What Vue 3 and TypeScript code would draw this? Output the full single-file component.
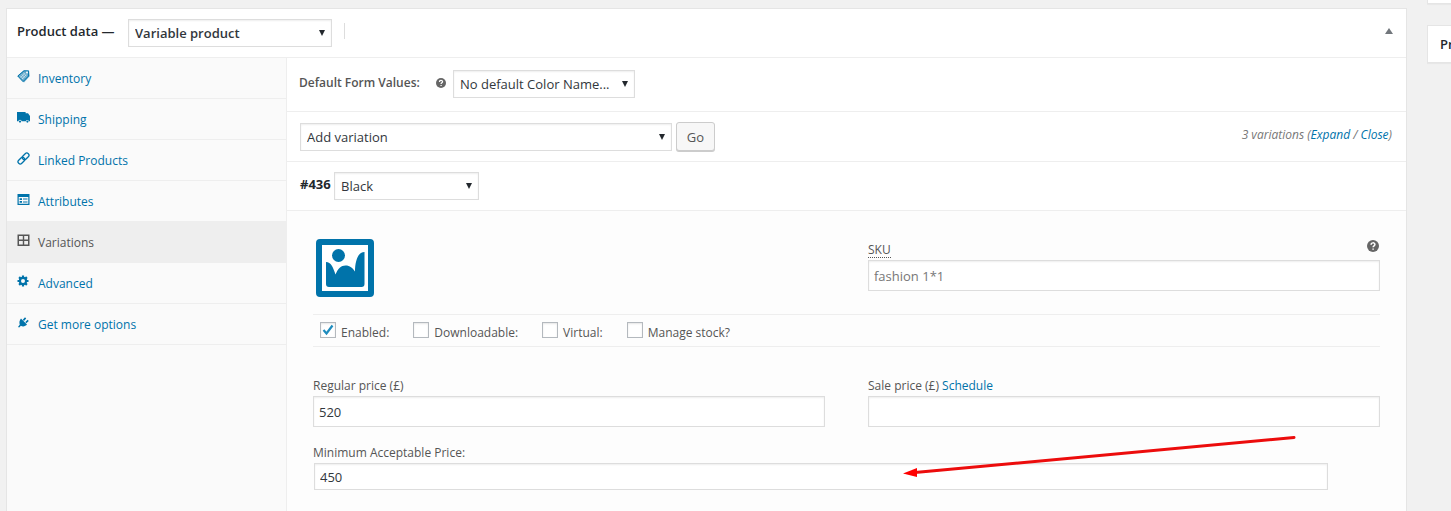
<script setup lang="ts">
import { ref } from 'vue'

interface Tab {
  id: string
  label: string
}

const tabs: Tab[] = [
  { id: 'inventory', label: 'Inventory' },
  { id: 'shipping', label: 'Shipping' },
  { id: 'linked', label: 'Linked Products' },
  { id: 'attributes', label: 'Attributes' },
  { id: 'variations', label: 'Variations' },
  { id: 'advanced', label: 'Advanced' },
  { id: 'more', label: 'Get more options' },
]
const active = ref('variations')

const flags = ref([
  { id: 'enabled', label: 'Enabled:', on: true },
  { id: 'downloadable', label: 'Downloadable:', on: false },
  { id: 'virtual', label: 'Virtual:', on: false },
  { id: 'stock', label: 'Manage stock?', on: false },
])

const regular = ref('520')
const sale = ref('')
const minimum = ref('450')
const sku = ref('')
</script>

<template>
  <div class="page">
    <main class="panel">
      <header class="panel-head">
        <label class="title" for="ptype">Product data —</label>
        <span class="select type">
          <select id="ptype"><option>Variable product</option></select>
          <svg viewBox="0 0 6 6"><path d="M0 0H6L3 6Z" /></svg>
        </span>
        <span class="divider"></span>
        <button class="toggle" type="button" aria-label="Toggle panel">
          <svg viewBox="0 0 8 6" width="8" height="6"><path d="M0 6H8L4 0Z" /></svg>
        </button>
      </header>

      <div class="panel-body">
        <nav class="tabs">
          <a v-for="t in tabs" :key="t.id" href="#" class="tab" :class="{ active: t.id === active }" @click.prevent="active = t.id">
            <svg v-if="t.id === 'inventory'" class="ico" viewBox="0 0 13 13">
              <path d="M0.5 6 6.5 0.6 12 1.2 12.6 6.2 7 12.4Z" opacity=".6" />
              <path class="line" d="M0.8 6 7 0.8H11.600V6L6 11.600Z" />
              <circle class="hole" cx="10" cy="2.6" r="1" />
              <path class="cut" d="M3 5.6 6.8 9.4M4.600 4.200 8.200 7.800M6.200 2.800 9.600 6.200M3.600 7.600 8 3.200M5 9 9.400 4.600" />
            </svg>
            <svg v-else-if="t.id === 'shipping'" class="ico" viewBox="0 0 13 13">
              <path d="M0 1H8.6V2.200H11L13 5V10.3H11.9A1.6 1.6 0 0 0 8.8 10.3H4.6A1.6 1.6 0 0 0 1.4 10.3H0Z" />
              <circle cx="3" cy="10.6" r="1.1" /><circle cx="10.4" cy="10.6" r="1.1" />
            </svg>
            <svg v-else-if="t.id === 'linked'" class="ico" viewBox="0 0 13 13">
              <g transform="rotate(-45 6.5 6.5)">
                <rect class="link" x="-0.3" y="4.3" width="7.6" height="4.4" rx="2.2" />
                <rect class="link" x="5.7" y="4.3" width="7.6" height="4.4" rx="2.2" />
              </g>
            </svg>
            <svg v-else-if="t.id === 'attributes'" class="ico" viewBox="0 0 13 13">
              <path fill-rule="evenodd" d="M0.5 1H12.5V12H0.5ZM1.7 4V10.8H11.3V4Z" />
              <path d="M2.6 5.2H5V7H2.6ZM2.6 8H5V9.8H2.6ZM6 5.5H10.5V6.6H6ZM6 8.4H10.5V9.5H6Z" />
            </svg>
            <svg v-else-if="t.id === 'variations'" class="ico" viewBox="0 0 13 13">
              <path fill-rule="evenodd" d="M0.5 0.5H12.5V12H0.5ZM2 2V5.6H5.8V2ZM7.2 2V5.6H11V2ZM2 7V10.6H5.8V7ZM7.2 7V10.6H11V7Z" />
            </svg>
            <svg v-else-if="t.id === 'advanced'" class="ico" viewBox="0 0 13 13">
              <circle class="ring" cx="6" cy="6" r="3.1" />
              <path class="teeth" d="M6 .5V2.6M6 9.4V11.5M.5 6H2.6M9.4 6H11.5M2.1 2.1 3.6 3.6M8.4 8.4 9.9 9.9M9.9 2.1 8.4 3.6M3.6 8.4 2.1 9.9" />
            </svg>
            <svg v-else class="ico" viewBox="0 0 13 13">
              <path d="M4 2.4 10 8.6C8.6 10.4 5.6 11 3.9 9.7L2.2 11.6 1 11 2.8 8.6C2 6.8 2.4 4 4 2.4Z" />
              <path class="pin" d="M6.4 4.4 8.6 1.9M8.8 6.6 11.2 4.3" />
            </svg>
            <span>{{ t.label }}</span>
          </a>
        </nav>

        <section class="content">
          <div class="bar defaults">
            <label class="strong" for="dform">Default Form Values:</label>
            <svg class="help small" viewBox="0 0 12 12">
              <circle cx="6" cy="6" r="6" />
              <path d="M4.1 4.7C4.1 2.3 7.9 2.3 7.9 4.5 7.9 5.9 6.1 5.8 6.1 7.3" /><path d="M6.1 8.4V9.7" />
            </svg>
            <span class="select color">
              <select id="dform"><option>No default Color Name...</option></select>
              <svg viewBox="0 0 6 6"><path d="M0 0H6L3 6Z" /></svg>
            </span>
          </div>

          <div class="bar add">
            <span class="select action">
              <select aria-label="Variation action"><option>Add variation</option></select>
              <svg viewBox="0 0 6 6"><path d="M0 0H6L3 6Z" /></svg>
            </span>
            <button class="go" type="button">Go</button>
            <p class="count">3 variations (<a href="#">Expand</a> / <a href="#">Close</a>)</p>
          </div>

          <div class="bar item">
            <label class="number" for="vcolor">#436</label>
            <span class="select black">
              <select id="vcolor"><option>Black</option></select>
              <svg viewBox="0 0 6 6"><path d="M0 0H6L3 6Z" /></svg>
            </span>
          </div>

          <div class="variation">
            <div class="row top">
              <a href="#" class="image" aria-label="Upload an image">
                <svg viewBox="0 0 58 58">
                  <path fill-rule="evenodd" d="M4 0H54A4 4 0 0 1 58 4V54A4 4 0 0 1 54 58H4A4 4 0 0 1 0 54V4A4 4 0 0 1 4 0ZM6 6V52H52V6Z" />
                  <path class="paper" d="M6 6H52V52H6Z" />
                  <circle cx="22.5" cy="16.5" r="6.5" />
                  <path d="M10 23C15 23 17 28 19.500 35.500C22 29.500 25 26.500 29.500 26.500C34 26.500 36.500 29 39 32.500C39 22 42 13 48.500 13V45A3 3 0 0 1 45.500 48H13A3 3 0 0 1 10 45Z" />
                </svg>
              </a>
              <div class="field">
                <div class="sku-head">
                  <label for="sku"><abbr title="Stock Keeping Unit">SKU</abbr></label>
                  <svg class="help" viewBox="0 0 12 12">
                    <circle cx="6" cy="6" r="6" />
                    <path d="M4.1 4.7C4.1 2.3 7.9 2.3 7.9 4.5 7.9 5.9 6.1 5.8 6.1 7.3" /><path d="M6.1 8.4V9.7" />
                  </svg>
                </div>
                <input id="sku" v-model="sku" type="text" placeholder="fashion 1*1" />
              </div>
            </div>

            <div class="flags">
              <label v-for="f in flags" :key="f.id">
                <span class="box">
                  <input v-model="f.on" type="checkbox" />
                  <svg v-if="f.on" viewBox="0 0 16 16"><path d="M3.500 8 6.500 11.500 12.500 3.500" /></svg>
                </span>
                <span>{{ f.label }}</span>
              </label>
            </div>

            <div class="row prices">
              <div class="field">
                <label for="regular">Regular price (£)</label>
                <input id="regular" v-model="regular" type="text" />
              </div>
              <div class="field">
                <div><label for="sale">Sale price (£)</label> <a href="#">Schedule</a></div>
                <input id="sale" v-model="sale" type="text" />
              </div>
            </div>

            <div class="field minimum">
              <label for="minimum">Minimum Acceptable Price:</label>
              <input id="minimum" v-model="minimum" type="text" />
            </div>
          </div>
        </section>
      </div>
    </main>

    <aside class="side">
      <div class="card stub"></div>
      <div class="card">Product gallery</div>
    </aside>

    <svg class="pointer" viewBox="0 0 400 50" width="400" height="50">
      <path class="shaft" d="M393 7.500 14 42.500" />
      <path class="head" d="M2 43.500 16 38V47Z" />
    </svg>
  </div>
</template>

<style>
body {
  background: #f1f1f1;
}
</style>

<style scoped>
.page,
.page * {
  box-sizing: border-box;
}
.page {
  position: relative;
  display: flex;
  gap: 20px;
  min-height: 100vh;
  padding-left: 6px;
  overflow: hidden;
  background: #f1f1f1;
  color: #555;
  font: 13px/20px "Segoe UI", "Open Sans", "Noto Sans", sans-serif;
}
a {
  color: #0073aa;
  text-decoration: none;
}
.panel {
  display: flex;
  flex: 1;
  flex-direction: column;
  min-width: 0;
  margin-top: 8px;
  border: 1px solid #e5e5e5;
  border-bottom: 0;
  background: #fff;
}
.panel-head {
  display: flex;
  align-items: center;
  height: 49px;
  padding: 0 13px 0 10px;
  border-bottom: 1px solid #eee;
}
.title {
  width: 111px;
  padding-bottom: 4px;
  color: #23282d;
  font-weight: 600;
  white-space: nowrap;
}
.divider {
  width: 1px;
  height: 16px;
  margin: 0 0 4px 12px;
  background: #ddd;
}
.toggle {
  display: flex;
  margin-left: auto;
  padding: 0 0 4px;
  border: 0;
  background: none;
}
.toggle svg {
  fill: #72777c;
}
.select {
  display: grid;
  align-items: center;
}
.select > * {
  grid-area: 1 / 1;
}
.select svg {
  justify-self: end;
  width: 6px;
  height: 6px;
  margin-right: 7px;
  pointer-events: none;
  fill: #23282d;
}
select {
  width: 100%;
  height: 28px;
  padding: 0 18px 0 6px;
  appearance: none;
  border: 1px solid #ddd;
  border-radius: 0;
  background: #fff;
  box-shadow: inset 0 1px 2px rgba(0, 0, 0, 0.07);
  color: #32373c;
  font: inherit;
}
.type {
  width: 204px;
}
.type select {
  font-weight: 600;
}
.color {
  width: 182px;
  margin-bottom: 2px;
}
.color select {
  padding-right: 8px;
}
.action {
  width: 372px;
}
.black {
  width: 145px;
}
.panel-body {
  display: flex;
  flex: 1;
}
.tabs {
  width: 280px;
  border-right: 1px solid #eee;
  background: #fafafa;
}
.tab {
  display: flex;
  align-items: center;
  gap: 8px;
  height: 41px;
  padding-left: 10px;
  border-bottom: 1px solid #eee;
  font-size: 12px;
}
.tab.active {
  background: #eee;
  color: #555;
}
.ico {
  width: 13px;
  height: 13px;
  margin-bottom: 3px;
  fill: currentColor;
}
.tab span {
  padding-top: 1px;
}
.ico .line,
.ico .link,
.ico .ring,
.ico .teeth,
.ico .pin {
  fill: none;
  stroke: currentColor;
  stroke-width: 1.3;
}
.ico .line {
  stroke-width: 1;
}
.ico .ring,
.ico .teeth {
  stroke-width: 2.2;
}
.ico .pin {
  stroke-width: 1.6;
}
.ico .cut {
  fill: none;
  stroke: #fafafa;
  stroke-width: 0.5;
}
.ico .hole {
  fill: #fafafa;
}
.content {
  display: flex;
  flex: 1;
  flex-direction: column;
  min-width: 0;
}
.bar {
  display: flex;
  align-items: center;
  height: 50px;
  padding: 0 14px 0 13px;
  border-bottom: 1px solid #eee;
}
.defaults {
  height: 54px;
  padding-left: 12px;
}
.strong {
  width: 137px;
  padding-bottom: 3px;
  font-size: 12px;
  font-weight: 600;
}
.help {
  width: 12px;
  height: 12px;
  margin: 1px 1px 0 0;
  fill: #666;
}
.help path {
  fill: none;
  stroke: #fff;
  stroke-width: 1.5;
}
.help.small {
  width: 10px;
  height: 10px;
  margin: 0 7px 3px 0;
}
.go {
  width: 39px;
  height: 29px;
  margin-left: 4px;
  padding: 0;
  border: 1px solid #ccc;
  border-radius: 3px;
  background: #f7f7f7;
  box-shadow: 0 1px 0 #ccc;
  color: #555;
  font: inherit;
}
.count {
  margin: 0 0 4px auto;
  color: #777;
  font-size: 12px;
  font-style: italic;
}
.item {
  height: 49px;
}
.number {
  width: 34px;
  padding-bottom: 4px;
  color: #23282d;
  font-weight: 700;
}
.variation {
  flex: 1;
  padding: 28px 26px 21px;
  background: #fdfdfd;
}
.row {
  display: grid;
  grid-template-columns: 1fr 1fr;
  gap: 43px;
}
.image {
  width: 58px;
  height: 58px;
  margin-left: 3px;
}
.image svg {
  display: block;
  fill: #0073aa;
}
.image .paper {
  fill: #fff;
}
.top {
  height: 75px;
}
.field {
  display: flex;
  flex-direction: column;
  font-size: 12px;
  line-height: 21px;
}
.sku-head {
  display: flex;
  justify-content: space-between;
}
abbr {
  display: inline-block;
  border-bottom: 1px dotted #555;
  text-decoration: none;
  line-height: 14px;
}
.field input {
  width: 100%;
  height: 31px;
  padding: 0 5px;
  border: 1px solid #ddd;
  background: #fff;
  box-shadow: inset 0 1px 2px rgba(0, 0, 0, 0.07);
  color: #32373c;
  font: inherit;
  font-size: 13px;
}
.field input::placeholder {
  color: #777;
  opacity: 1;
}
.flags {
  display: flex;
  gap: 24px;
  height: 33px;
  padding-left: 7px;
  border: solid #eee;
  border-width: 1px 0;
}
.flags label {
  display: flex;
  align-items: center;
  gap: 5px;
  font-size: 12px;
}
.flags label > span:last-child {
  padding-top: 4px;
}
.box {
  display: grid;
  margin-bottom: 1px;
}
.box > * {
  grid-area: 1 / 1;
  width: 16px;
  height: 16px;
  margin: 0;
}
.box input {
  appearance: none;
  border: 1px solid #b4b9be;
  background: #fff;
  box-shadow: inset 0 1px 2px rgba(0, 0, 0, 0.1);
}
.box svg {
  fill: none;
  stroke: #1e8cbe;
  stroke-width: 2.2;
  pointer-events: none;
}
.prices {
  margin: 28px 0 15px;
}
.field.minimum input {
  width: 95%;
  height: 27px;
  margin-left: 1px;
}
.side {
  width: 24px;
  overflow: hidden;
}
.card {
  width: 280px;
  height: 38px;
  padding: 8px 12px;
  border: 1px solid #e5e5e5;
  background: #fff;
  box-shadow: 0 1px 1px rgba(0, 0, 0, 0.04);
  color: #23282d;
  font-weight: 600;
}
.stub {
  height: 4px;
  margin-bottom: 21px;
  padding: 0;
  border-top: 0;
}
.pointer {
  position: absolute;
  top: 430px;
  left: 901px;
  pointer-events: none;
}
.shaft {
  fill: none;
  stroke: #ec0c0c;
  stroke-width: 3;
  stroke-linecap: round;
}
.head {
  fill: #f00;
}
</style>
